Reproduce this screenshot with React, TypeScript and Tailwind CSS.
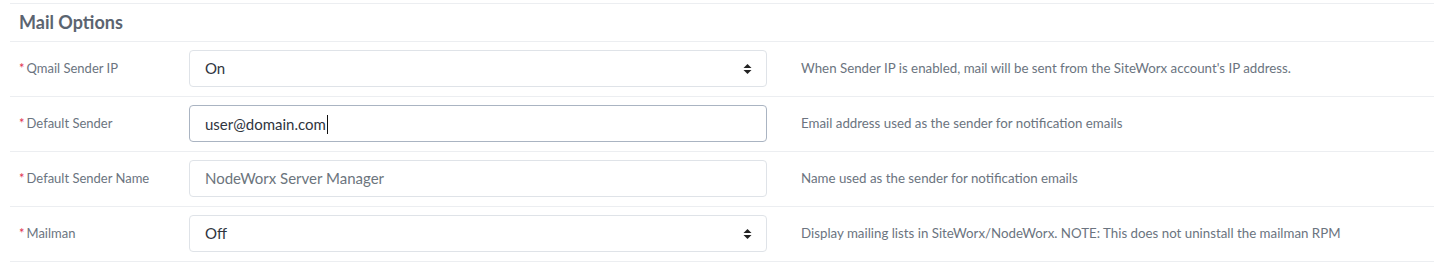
type Row = {
  label: string;
  value: string;
  kind: 'select' | 'text' | 'placeholder';
  focused?: boolean;
  help: string;
};

const rows: Row[] = [
  {
    label: 'Qmail Sender IP',
    value: 'On',
    kind: 'select',
    help: "When Sender IP is enabled, mail will be sent from the SiteWorx account's IP address.",
  },
  {
    label: 'Default Sender',
    value: 'user@domain.com',
    kind: 'text',
    focused: true,
    help: 'Email address used as the sender for notification emails',
  },
  {
    label: 'Default Sender Name',
    value: 'NodeWorx Server Manager',
    kind: 'placeholder',
    help: 'Name used as the sender for notification emails',
  },
  {
    label: 'Mailman',
    value: 'Off',
    kind: 'select',
    help: 'Display mailing lists in SiteWorx/NodeWorx. NOTE: This does not uninstall the mailman RPM',
  },
];

function SortArrows() {
  return (
    <svg width="9" height="12" viewBox="0 0 9 12" className="shrink-0">
      <path d="M4.5 1 L8.5 5 H0.5 Z" fill="#222" />
      <path d="M4.5 11 L8.5 7 H0.5 Z" fill="#222" />
    </svg>
  );
}

function Control({ row }: { row: Row }) {
  const border = row.focused ? 'border-[#aab4c2]' : 'border-[#dfe3e8]';
  return (
    <div
      className={`flex h-[37px] w-[578px] shrink-0 items-center justify-between rounded-[4px] border bg-white pl-[15px] pr-[14px] text-[15px] ${border}`}
    >
      <span className={row.kind === 'placeholder' ? 'text-[#6c757d]' : 'text-[#2f3540]'}>
        {row.value}
        {row.focused && (
          <span className="ml-[1px] inline-block h-[19px] w-[1px] translate-y-[4px] bg-[#111]" />
        )}
      </span>
      {row.kind === 'select' && <SortArrows />}
    </div>
  );
}

export default function App() {
  return (
    <div className="min-h-[263px] bg-white pt-[3px] font-['Lato','Open_Sans',sans-serif]">
      <div className="ml-[10px] border-t border-[#eceef1]">
        <div className="flex h-[38px] items-center border-b border-[#eceef1] pl-[9px]">
          <h2 className="text-[18px] font-bold text-[#5b6470]">Mail Options</h2>
        </div>
        {rows.map((row) => (
          <div
            key={row.label}
            className="flex h-[55px] items-center border-b border-[#eceef1] pb-[1px]"
          >
            <div className="flex w-[179px] shrink-0 items-center pl-[9px] text-[13px] text-[#6b7480]">
              <span className="mr-[2px] text-[#e0304f]">*</span>
              {row.label}
            </div>
            <Control row={row} />
            <div className="pl-[34px] text-[13.3px] text-[#6b7480]">{row.help}</div>
          </div>
        ))}
      </div>
    </div>
  );
}
